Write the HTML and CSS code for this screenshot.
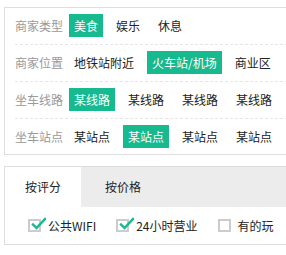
FILE: index.html
```html
<!DOCTYPE html>
<html lang="zh">
<head>
<meta charset="utf-8">
<link rel="stylesheet" href="styles.css">
</head>
<body>
<div class="filter">
  <div class="row">
    <span class="label">商家类型</span>
    <span class="item active">美食</span>
    <span class="item">娱乐</span>
    <span class="item">休息</span>
  </div>
  <div class="row">
    <span class="label">商家位置</span>
    <span class="item">地铁站附近</span>
    <span class="item active">火车站/机场</span>
    <span class="item">商业区</span>
  </div>
  <div class="row">
    <span class="label">坐车线路</span>
    <span class="item active">某线路</span>
    <span class="item">某线路</span>
    <span class="item">某线路</span>
    <span class="item">某线路</span>
  </div>
  <div class="row">
    <span class="label">坐车站点</span>
    <span class="item">某站点</span>
    <span class="item active">某站点</span>
    <span class="item">某站点</span>
    <span class="item">某站点</span>
  </div>
</div>
<div class="sort">
  <div class="tabs">
    <span class="tab active">按评分</span>
    <span class="tab">按价格</span>
  </div>
  <div class="checks">
    <label class="check checked"><span class="box"><svg class="tick" viewBox="0 0 16 16" width="16" height="16"><path d="M3 7.5 L6.5 11 L15 2" fill="none" stroke="#17b98e" stroke-width="2.4" stroke-linecap="square"/></svg></span>公共WIFI</label>
    <label class="check checked"><span class="box"><svg class="tick" viewBox="0 0 16 16" width="16" height="16"><path d="M3 7.5 L6.5 11 L15 2" fill="none" stroke="#17b98e" stroke-width="2.4" stroke-linecap="square"/></svg></span>24小时营业</label>
    <label class="check"><span class="box"></span>有的玩</label>
  </div>
</div>
</body>
</html>
```
FILE: styles.css
```css
html, body {
  margin: 0;
  overflow: hidden;
  background: #fff;
}
body {
  padding: 7px 0 0 4px;
  font-family: "Noto Sans CJK SC", "Microsoft YaHei", sans-serif;
  font-size: 12px;
  color: #222;
}
.filter {
  width: 320px;
  border: 1px solid #ddd;
  padding-left: 10px;
  box-sizing: border-box;
}
.row {
  display: flex;
  align-items: center;
  padding: 6px 0 7px;
  border-bottom: 1px dashed #e6e6e6;
}
.row:last-child {
  border-bottom: none;
  padding-bottom: 6px;
}
.label {
  width: 54px;
  color: #999;
  line-height: 23px;
  white-space: nowrap;
}
.item {
  height: 23px;
  line-height: 23px;
  padding: 0 5px;
  margin-right: 8px;
  white-space: nowrap;
  color: #222;
}
.item.active {
  background: #17b98e;
  color: #fff;
}
.sort {
  width: 320px;
  margin-top: 11px;
  border: 1px solid #ddd;
  box-sizing: border-box;
}
.tabs {
  display: flex;
  background: #ececec;
  height: 40px;
}
.tab {
  line-height: 40px;
  padding: 0 20px;
  color: #222;
}
.tab.active {
  background: #fff;
}
.tab + .tab {
  padding-left: 24px;
}
.checks {
  display: flex;
  align-items: center;
  height: 37px;
  padding-left: 23px;
}
.check {
  display: flex;
  align-items: center;
  margin-right: 20px;
  line-height: 16px;
  white-space: nowrap;
}
.box {
  position: relative;
  width: 13px;
  height: 13px;
  border: 2px solid #ccc;
  box-sizing: border-box;
  margin-right: 7px;
}
.tick {
  position: absolute;
  left: 0;
  top: -4px;
}
```
